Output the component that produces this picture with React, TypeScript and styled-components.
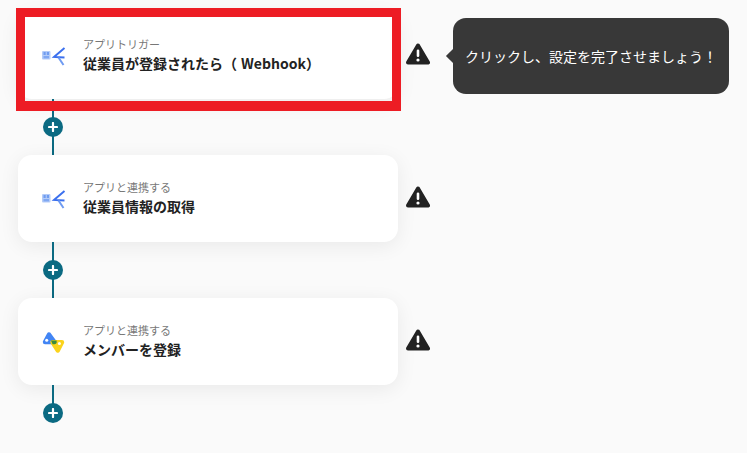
import styled, { createGlobalStyle } from 'styled-components';

const GlobalStyle = createGlobalStyle`
  html, body {
    margin: 0;
    padding: 0;
    background-color: #fafafa;
    overflow: hidden;
  }
`;

const Page = styled.div`
  display: flex;
  flex-direction: column;
  width: 747px;
  height: 453px;
  padding: 12px 0 0 18px;
  box-sizing: border-box;
  overflow: hidden;
  font-family: 'Noto Sans CJK JP', 'Noto Sans', sans-serif;
`;

const StepRow = styled.div`
  position: relative;
  display: flex;
  align-items: center;
  gap: 8px;
`;

const Card = styled.div`
  display: flex;
  align-items: center;
  gap: 17px;
  width: 380px;
  height: 87px;
  padding-left: 21px;
  box-sizing: border-box;
  background-color: #fff;
  border-radius: 14px;
  box-shadow: 0 4px 20px rgba(0, 0, 0, 0.07);
`;

const LogoBox = styled.div`
  display: flex;
  width: 27px;
  height: 27px;
  flex-shrink: 0;
`;

const CardText = styled.div`
  display: flex;
  flex-direction: column;
  padding-bottom: 2px;
`;

const Label = styled.div`
  font-size: 11px;
  line-height: 17px;
  color: #777;
`;

const Title = styled.div`
  font-size: 14px;
  line-height: 20px;
  font-weight: 700;
  color: #222;
`;

const Latin = styled.span`
  margin-left: 4px;
`;

const WarningBox = styled.div`
  display: flex;
  width: 24px;
  height: 22px;
  margin-top: -3px;
`;

const Highlight = styled.div`
  position: absolute;
  left: -2px;
  top: -4px;
  width: 385px;
  height: 103px;
  box-sizing: border-box;
  border: 9px solid #ed1c24;
  border-bottom-width: 10px;
  pointer-events: none;
  z-index: 2;
`;

const Tooltip = styled.div`
  position: absolute;
  left: 435px;
  top: 6px;
  display: flex;
  align-items: center;
  justify-content: center;
  width: 276px;
  height: 76px;
  background-color: #383838;
  border-radius: 13px;
  color: #fff;
  font-size: 14px;

  &::before {
    content: '';
    position: absolute;
    left: -5px;
    top: 33px;
    width: 10px;
    height: 10px;
    background-color: #383838;
    transform: rotate(45deg);
  }
`;

const Connector = styled.div<{ $last?: boolean }>`
  position: relative;
  display: flex;
  align-items: center;
  justify-content: center;
  width: 20px;
  height: ${(props) => (props.$last ? '38px' : '56px')};
  margin-left: 25px;

  &::before {
    content: '';
    position: absolute;
    left: 9px;
    top: 0;
    width: 2px;
    height: ${(props) => (props.$last ? '28px' : '56px')};
    background-color: #0b6a82;
  }
`;

const AddButton = styled.button<{ $last?: boolean }>`
  position: relative;
  display: flex;
  align-items: center;
  justify-content: center;
  width: 20px;
  height: 20px;
  margin-top: ${(props) => (props.$last ? '18px' : '0')};
  padding: 0;
  border: none;
  border-radius: 50%;
  background-color: #0b6a82;
`;

function YoomLogo() {
  return (
    <svg width="27" height="27" viewBox="0 0 27 27">
      <rect x="3" y="9" width="8.5" height="8.5" rx="1" fill="#b4ccf8" />
      <rect x="4.5" y="10" width="2.2" height="3" fill="#6f9cf0" />
      <rect x="7.8" y="10" width="2.2" height="3" fill="#6f9cf0" />
      <rect x="4.5" y="14" width="5.5" height="2.4" fill="#7fa7f2" />
      <path d="M25.5 6L15 15L25.5 15.5" fill="none" stroke="#3b70ee" strokeWidth="1.9" />
      <path d="M19.5 15.5L24.5 23" fill="none" stroke="#6f9bf2" strokeWidth="2" />
    </svg>
  );
}

function WorkspaceLogo() {
  return (
    <svg width="27" height="27" viewBox="0 0 27 27">
      <path d="M10 6.5L15.5 14H6Z" fill="#4285f4" stroke="#4285f4" strokeWidth="4.4" strokeLinejoin="round" />
      <path d="M13.5 14.2H23L18.8 22.5Z" fill="#fbd31c" stroke="#fbd31c" strokeWidth="4.4" strokeLinejoin="round" />
      <path d="M12 12.4H17.6V14.8Q17.5 16.2 15.5 16.2H13.6Z" fill="#3b8a3e" />
      <circle cx="7.7" cy="12.2" r="1.5" fill="#fff" />
      <circle cx="20.4" cy="15.5" r="1.5" fill="#fff" />
    </svg>
  );
}

function WarningIcon() {
  return (
    <svg width="24" height="22" viewBox="0 0 24 22">
      <path d="M12 2.5L22 19.5H2Z" fill="#222" stroke="#222" strokeWidth="4" strokeLinejoin="round" />
      <rect x="10.7" y="6.5" width="2.6" height="7.5" rx="1.3" fill="#fff" />
      <circle cx="12" cy="17" r="1.6" fill="#fff" />
    </svg>
  );
}

function PlusIcon() {
  return (
    <svg width="10" height="10" viewBox="0 0 10 10">
      <path d="M5 1V9M1 5H9" stroke="#fff" strokeWidth="2.2" strokeLinecap="round" />
    </svg>
  );
}

const STEPS = [
  {
    label: 'アプリトリガー',
    title: (
      <>
        従業員が登録されたら（<Latin>Webhook</Latin>）
      </>
    ),
    logo: <YoomLogo />,
    active: true,
  },
  { label: 'アプリと連携する', title: '従業員情報の取得', logo: <YoomLogo />, active: false },
  { label: 'アプリと連携する', title: 'メンバーを登録', logo: <WorkspaceLogo />, active: false },
];

export default function App() {
  return (
    <Page>
      <GlobalStyle />
      {STEPS.map((step, index) => {
        const last = index === STEPS.length - 1;
        return (
          <div key={index}>
            <StepRow>
              <Card>
                <LogoBox>{step.logo}</LogoBox>
                <CardText>
                  <Label>{step.label}</Label>
                  <Title>{step.title}</Title>
                </CardText>
              </Card>
              <WarningBox>
                <WarningIcon />
              </WarningBox>
              {step.active && <Highlight />}
              {step.active && <Tooltip>クリックし、設定を完了させましょう！</Tooltip>}
            </StepRow>
            <Connector $last={last}>
              <AddButton $last={last}>
                <PlusIcon />
              </AddButton>
            </Connector>
          </div>
        );
      })}
    </Page>
  );
}
